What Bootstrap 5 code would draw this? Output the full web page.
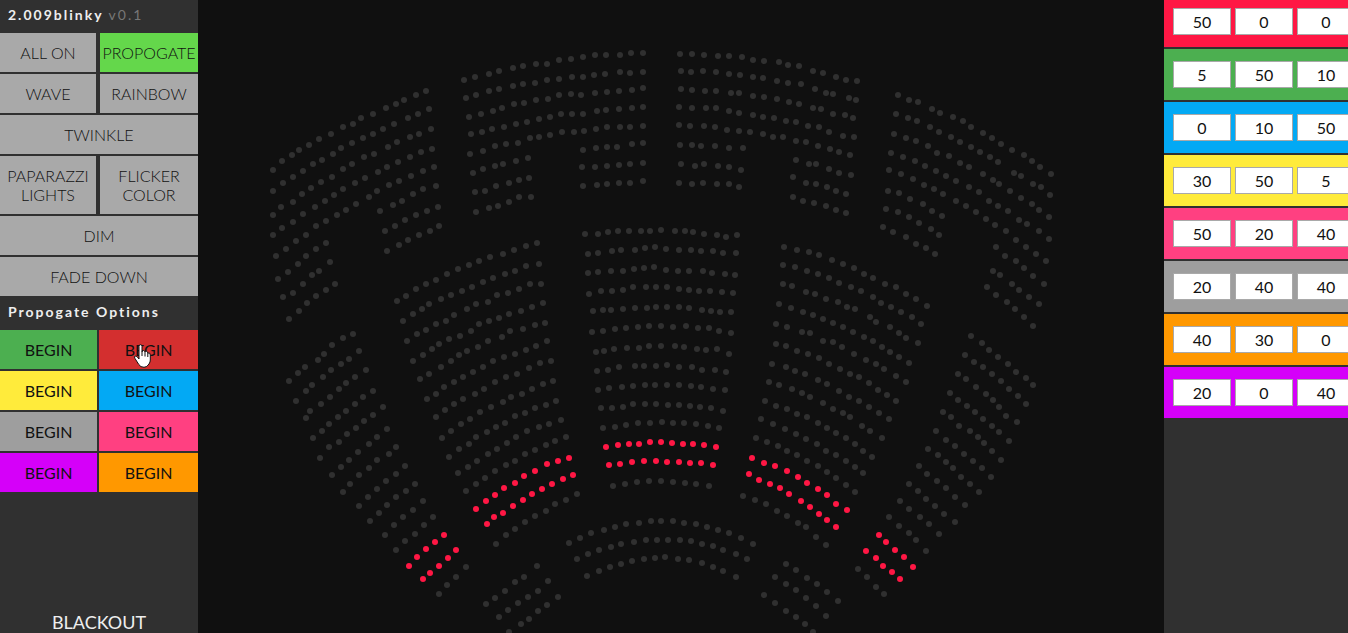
<!DOCTYPE html>
<html lang="en">
<head>
<meta charset="utf-8">
<meta name="viewport" content="width=device-width, initial-scale=1">
<title>2.009blinky</title>
<link href="https://cdn.jsdelivr.net/npm/bootstrap@5.3.0/dist/css/bootstrap.min.css" rel="stylesheet">
<style>
body{background:#101010;font-family:Lato,"Open Sans",sans-serif;color:#111}
.side{width:198px;background:#303030}
.palette{width:184px;background:#303030;gap:2px}
.heading{font-size:14px;line-height:18px;font-weight:700;letter-spacing:2px;color:#eee;padding:6px 8px 9px;margin:0}
.heading.options{padding:7px 8px 9px}
.heading .version{color:#777;font-weight:400}
.modes{display:grid;grid-template-columns:96fr 98fr;gap:2px 4px}
.begins{display:grid;grid-template-columns:97fr 99fr;gap:2px}
.wide{grid-column:1/-1}
.tile{--bs-btn-border-width:0px;border-radius:0;padding:10px 0;font-size:16px;line-height:19px;color:#111;background:var(--tone,#a9a9a9)}
.tile:hover,.tile:active{background:var(--tone,#a9a9a9)!important;color:#111!important}
.modes .tile{font-weight:300}
.hand{left:35px;top:14px;pointer-events:none}
.blackout{border:0;border-radius:0;color:#eee;font-size:18px;line-height:22px;padding:0}
.blackout:hover{color:#fff}
.swatch{background:var(--tone);padding:12px 9px}
.swatch:first-child{padding-top:8px}
.level{width:58px;height:27px;border:1px solid #a9a9a9;border-radius:0;background:#fff;color:#111;font-size:16px;line-height:19px;padding:0;text-align:center;flex:none}
.seats{fill:#303030}
.lit{fill:#ff1744}
.green{--tone:#4caf50}.red{--tone:#d32f2f}.yellow{--tone:#ffeb3b}.blue{--tone:#03a9f4}
.grey{--tone:#9e9e9e}.pink{--tone:#ff4081}.violet{--tone:#d500f9}.amber{--tone:#ff9800}
.crimson{--tone:#ff1744}.active-mode{--tone:#64d74b}
</style>
</head>
<body>
<div class="d-flex vh-100 overflow-hidden">
  <aside class="side d-flex flex-column flex-shrink-0">
    <h1 class="heading">2.009blinky <span class="version">v0.1</span></h1>
    <div class="modes">
      <button type="button" class="btn tile">ALL ON</button>
      <button type="button" class="btn tile active-mode">PROPOGATE</button>
      <button type="button" class="btn tile">WAVE</button>
      <button type="button" class="btn tile">RAINBOW</button>
      <button type="button" class="btn tile wide">TWINKLE</button>
      <button type="button" class="btn tile">PAPARAZZI<br>LIGHTS</button>
      <button type="button" class="btn tile">FLICKER<br>COLOR</button>
      <button type="button" class="btn tile wide">DIM</button>
      <button type="button" class="btn tile wide">FADE DOWN</button>
    </div>
    <h2 class="heading options">Propogate Options</h2>
    <div class="begins">
      <button type="button" class="btn tile green">BEGIN</button>
      <button type="button" class="btn tile red position-relative">BEGIN
        <svg class="hand position-absolute" width="17" height="24" viewBox="0 0 17 24" aria-hidden="true"><path d="M5 15V2.500Q5 .7 6.500 .7T8 2.500V8Q8.300 6.300 9.600 6.500T11 8Q11.500 7 12.700 7.400T13.800 9Q16.300 8.300 16.300 11V16Q16.300 18 15 20Q13 23.300 10 23.300Q6.500 23.300 4.800 20.500L1 14.500Q-.2 12.700 1.200 12Q2.700 11.400 5 15Z" fill="#fff" stroke="#111" stroke-width="1"/><path d="M8 8V12M11 8V12.500M13.800 9V13" stroke="#111" fill="none"/></svg>
      </button>
      <button type="button" class="btn tile yellow">BEGIN</button>
      <button type="button" class="btn tile blue">BEGIN</button>
      <button type="button" class="btn tile grey">BEGIN</button>
      <button type="button" class="btn tile pink">BEGIN</button>
      <button type="button" class="btn tile violet">BEGIN</button>
      <button type="button" class="btn tile amber">BEGIN</button>
    </div>
    <button type="button" class="btn blackout mt-auto">BLACKOUT</button>
  </aside>

  <main class="flex-grow-1 overflow-hidden">
    <svg id="plan" class="seats d-block w-100 h-100" viewBox="198 0 966 633" preserveAspectRatio="xMidYMin meet" role="img" aria-label="Auditorium seats"></svg>
  </main>

  <aside class="palette d-flex flex-column flex-shrink-0 overflow-hidden" id="palette"></aside>
</div>

<script src="https://cdn.jsdelivr.net/npm/bootstrap@5.3.0/dist/js/bootstrap.bundle.min.js"></script>
<script>
// Seating blocks: origin in plan units, subdivisions per unit, then one line per row.
// A row that starts with * is lit.
const blocks = [
[255,40,3,`54,390 81,363 111,345 132,330 162,315 192,297 228,282 264,261 294,252 318,234 354,222 393,204 423,192 447,180 483,165 513,153
54,453 84,429 114,411 144,393 174,372 201,360 234,342 258,324 291,309 324,294 354,282 384,267 417,252 459,234 489,222 522,207
54,525 78,501 114,486 141,462 168,444 198,426 231,411 264,387 291,372 327,351 357,342 399,321 426,306 465,291 492,282 528,267
54,585 81,564 114,546 144,522 180,501 210,483 237,465 264,447 300,429 330,414 369,396 396,381 429,366 465,351 498,336 531,327
63,648 93,627 123,603 153,585 183,558 213,543 246,525 273,510 303,492 342,471 366,453 402,435 432,423 468,408 504,393 537,381
69,717 99,696 129,672 153,648 183,627 213,609 375,513 414,495 441,483 474,462 504,447 543,438
84,771 114,759 144,732 171,705 192,693 225,666 390,573 420,558 450,540 483,525 516,513 549,501
102,837 132,813 156,789 183,768 213,750 240,732 396,633 432,615 459,600 492,585 525,573 552,558`],
[450,40,3,`42,120 75,111 117,102 147,93 189,84 219,78 258,72 291,72 327,60 363,57 399,51 435,45 468,45 510,45 543,39 579,39
48,174 78,165 117,153 147,147 189,138 219,132 255,129 291,120 327,117 366,111 399,111 432,105 465,102 510,96 540,99 579,96
57,231 93,222 129,213 156,204 192,192 222,189 258,180 294,177 327,165 363,162 393,165 435,159 471,156 507,153 546,150 579,144
63,282 96,276 126,267 162,261 198,252 231,246 267,237 300,231 333,222 366,222 399,222 441,213 468,210 507,207 546,204 579,201
60,342 99,333 135,318 168,312 204,309 240,294 267,291 300,285 336,276 372,276 402,273 438,267 471,261 510,261 540,261 579,258
69,399 99,387 135,378 159,372 198,363 234,354 399,330 438,324 471,321 501,321 546,312 579,309
75,456 105,453 138,438 177,429 207,420 237,414 396,381 435,381 471,378 507,375 540,372 579,369
78,516 117,504 144,498 177,486 207,471 243,471 399,438 441,435 471,432 507,429 540,429 579,423`],
[660,40,3,`60,42 96,42 132,45 174,48 207,48 246,51 279,60 312,63 357,66 384,75 417,78 459,93 489,99 528,111 558,120 591,123
63,93 93,96 129,93 168,96 207,102 240,105 279,111 309,114 351,123 384,129 423,132 465,147 498,159 519,162 567,174 588,180
63,147 96,150 135,153 168,153 213,159 237,159 279,168 312,171 351,177 387,186 417,192 459,204 483,207 519,222 555,225 579,234
57,201 96,204 138,204 168,204 207,213 237,219 279,225 309,231 342,234 378,243 408,246 444,258 477,261 507,276 549,288 582,291
57,255 90,258 132,258 165,261 201,270 237,273 270,276 309,282 339,291 369,291 408,303 438,306 474,318 510,327 537,336 570,345
60,315 96,315 123,318 165,318 207,324 249,324 408,360 447,372 468,372 507,387 537,399 573,405
63,372 105,378 132,372 174,378 207,381 243,390 399,411 438,429 468,432 501,441 528,453 558,462
57,429 96,432 129,429 171,432 207,432 237,441 399,471 429,483 462,489 498,498 528,510 558,519`],
[865,80,3,`99,45 132,60 159,66 201,87 225,99 264,111 294,123 318,141 354,159 381,174 408,192 441,210 477,225 501,243 525,261 558,282
93,102 129,114 156,123 195,141 222,156 258,171 285,186 318,201 345,216 375,231 399,246 447,279 468,288 504,312 528,321 555,345
87,162 123,174 153,183 189,198 216,219 252,228 285,249 312,261 354,282 384,300 402,312 435,333 468,354 501,372 522,390 552,411
78,219 114,231 150,243 180,258 213,273 243,288 273,303 312,321 342,336 372,363 399,378 429,393 462,420 486,432 522,453 552,477
72,270 108,282 144,297 177,315 207,327 234,342 273,363 303,378 333,396 363,417 390,435 423,453 453,480 483,501 513,522 543,543
69,333 102,339 135,357 174,372 201,393 231,408 393,501 420,528 453,543 477,564 504,588 537,612
63,387 99,396 132,411 162,429 198,447 222,465 384,573 405,585 441,612 462,630 492,651 522,672
54,441 84,456 123,471 153,492 183,504 210,522 366,621 393,645 426,666 450,687 477,711 504,738`],
[275,320,3,`42,183 69,159 90,141 129,120 147,102 171,75 204,54 234,42
63,243 93,213 111,195 144,171 168,150 198,132 222,117 252,93
93,294 105,273 138,252 165,231 192,207 213,189 240,171 273,150
114,354 141,333 162,312 189,291 213,273 240,252 264,231 294,213
135,414 162,381 192,366 216,342 243,324 267,303 294,285 324,261
171,465 198,441 222,420 249,396 282,372 306,351 336,327
204,516 225,492 252,465 282,444 306,420 342,402 363,381
252,558 279,531 306,507 333,483 363,462 390,438
285,603 312,579 336,555 363,531 393,513 420,492
330,645 357,615 384,591 414,570 444,543
363,690 390,663 420,642 447,615 474,591
*402,738 426,711 453,687 480,666 507,645
*444,777 465,759 492,738 519,714 543,690
492,822 516,795 543,771 573,741`],
[380,220,3,`51,243 78,228 108,207 138,192 168,180 201,162 234,147 267,135 297,123 330,111 369,102 402,90 438,78 471,69
69,303 99,282 126,267 147,252 183,237 213,225 246,213 276,201 309,186 339,174 375,162 405,153 438,138 477,132
81,363 111,342 138,330 168,312 198,303 222,285 261,267 288,252 324,246 351,225 384,219 417,207 450,192 483,192
99,423 129,405 156,387 177,372 207,357 240,348 273,333 297,312 327,303 357,294 387,282 423,273 456,261 489,249
120,477 147,462 183,441 213,423 237,405 261,393 294,381 324,363 366,351 390,333 429,327 465,315 495,309
141,537 168,522 192,501 222,486 249,471 279,456 309,441 339,423 372,411 405,402 438,390 468,378 501,363
168,591 195,570 222,552 249,537 285,522 312,507 345,486 378,471 411,462 447,444 480,429 513,423
186,654 213,633 243,612 270,597 300,576 333,561 369,546 393,531 426,522 456,507 489,492 519,483
207,711 237,687 267,672 288,651 321,636 348,621 375,609 405,588 435,579 465,564 498,555 528,543
234,759 264,741 291,723 324,702 351,687 381,669 408,651 441,633 477,621 507,612 543,600
258,813 288,792 315,774 345,753 378,735 405,723 435,702 465,690 498,675 525,663 558,651
*288,867 318,843 345,825 372,804 405,789 432,768 465,753 501,732 534,723 567,714
*321,912 342,891 369,879 399,858 429,840 456,822 486,807 516,792 549,777 579,765
348,972 378,945 405,927 435,906 465,888 498,873 525,852 558,840 591,822`],
[570,220,3,`45,42 84,42 114,36 144,33 177,33 213,33 240,33 273,30 315,33 345,33 369,36 402,42 441,45 468,51 501,45
54,102 84,99 126,93 153,90 195,90 225,84 255,81 288,87 327,90 363,90 393,93 429,93 459,99 498,99
54,159 84,156 123,153 159,153 192,147 222,144 252,141 288,150 324,153 357,153 399,153 426,159 465,162 495,165
57,222 93,213 126,213 159,210 189,201 228,201 258,201 291,201 327,207 357,210 387,213 420,213 456,216 489,219
69,273 99,270 123,270 159,267 195,264 231,264 258,261 291,261 327,261 357,264 396,270 423,273 450,276 483,276
66,336 99,333 135,327 168,324 204,321 237,318 273,318 309,321 348,318 384,324 417,324 447,333 483,339
78,396 102,393 132,387 171,384 207,384 237,378 273,378 315,378 342,381 381,387 408,390 441,387 477,402
81,453 114,450 147,441 195,438 222,438 258,438 291,435 327,441 366,441 396,450 435,450 468,456
84,510 117,504 156,501 189,498 225,495 255,495 291,495 327,495 363,498 393,501 429,507 465,510
93,564 126,564 159,561 189,552 225,552 258,552 294,555 327,555 360,558 390,561 423,564 459,573
99,624 135,621 168,615 204,609 240,609 276,606 309,609 342,609 378,612 414,618 447,624
*108,681 144,675 177,672 207,672 240,666 273,666 306,669 339,672 369,672 402,675 438,681
*117,735 150,732 186,726 222,723 258,723 291,726 327,726 360,729 393,729 429,735
129,798 165,792 201,786 237,783 273,783 309,786 345,789 378,792 417,798`],
[740,230,3,`132,51 171,60 207,66 237,75 276,90 309,102 342,114 372,132 399,144 435,162 468,171 498,192 528,207 561,228
129,105 165,111 201,123 234,132 267,144 297,159 333,171 363,183 399,201 423,219 453,231 483,246 516,261 543,282
129,162 156,168 198,186 225,192 258,207 294,216 321,231 345,237 390,261 408,276 450,291 477,309 498,324 534,339
117,222 153,234 189,246 219,255 249,267 279,279 309,291 339,306 372,321 399,333 426,351 450,366 477,381 507,399
108,282 141,291 186,306 210,309 249,333 279,336 306,351 342,372 378,390 408,402 432,417 468,438 498,456
108,342 138,348 171,363 204,372 237,384 267,402 300,417 330,432 357,441 387,459 414,480 441,495 468,513
96,402 138,411 165,423 195,432 234,450 261,462 297,483 327,501 357,513 387,531 417,549 447,567
87,456 117,465 156,477 186,489 210,501 249,519 279,537 309,549 330,561 366,588 390,603 426,624
75,513 108,528 141,537 171,552 201,561 234,579 261,594 288,609 318,624 345,642 369,663 396,681
63,567 99,582 135,597 168,612 198,627 231,642 258,663 288,675 318,693 345,711 369,729
48,624 81,636 114,648 141,663 171,675 201,693 234,708 261,726 288,744 318,765 345,786
*36,684 72,699 105,708 141,723 174,741 201,759 234,777 261,795 288,822 321,840
*27,732 57,750 90,762 120,774 147,792 183,813 210,831 237,852 261,870 288,891
9,798 45,810 78,822 111,843 141,858 174,879 198,891 228,921 258,945`],
[840,320,3,`393,48 426,69 447,90 474,111 504,132 528,156 558,174 579,195
375,105 402,126 429,141 456,162 483,183 507,207 534,228 558,252
354,162 378,177 408,201 438,222 459,240 477,261 498,288 531,306
330,219 354,240 381,258 405,276 429,297 456,318 477,336 507,363
309,276 333,291 357,318 390,333 414,351 432,369 456,393 483,420
288,333 318,360 345,378 372,402 399,423 426,444 453,471
264,387 294,405 318,426 339,444 363,471 390,492 417,516
237,438 261,462 291,483 318,504 345,531 375,555
207,492 234,513 258,537 285,558 312,582 345,606
180,543 207,567 240,591 267,612 297,642
147,591 177,618 207,639 228,660 258,693
*117,645 138,666 165,690 192,711 219,741
*78,693 108,714 129,738 156,756 180,777
54,747 81,771 108,801 132,822`],
[0,0,1,`569,543 580,538 591,533 604,530 615,527 626,524 639,523 651,521 661,521 673,521 684,523 696,524 707,527 718,530 729,533 741,538 753,544
577,559 588,554 599,550 611,547 621,544 634,542 646,540 657,540 668,540 680,540 691,541 702,544 713,546 723,550 736,554 747,559
587,576 599,571 610,567 621,564 632,561 644,559 655,558 665,557 678,559 689,560 702,563 713,567 723,571 736,577
486,604 495,598 505,591 515,582 524,577 537,566
499,617 508,610 518,603 528,597 538,591 548,581
509,632 521,624 529,619 538,611 547,605 558,597
786,564 796,570 807,578 817,584 827,592 838,601
775,577 786,584 796,590 806,598 816,606 826,616
764,595 775,603 786,611 796,617 805,624 813,632`]
];
document.getElementById('plan').innerHTML = blocks.map(([ox, oy, n, rows]) =>
  rows.split('\n').map(row => {
    const lit = row[0] === '*';
    const seats = row.replace('*', '').split(' ').map(s => {
      const [x, y] = s.split(',');
      return `<circle cx="${ox + x / n}" cy="${oy + y / n}" r="3"/>`;
    }).join('');
    return `<g${lit ? ' class="lit"' : ''}>${seats}</g>`;
  }).join('')).join('');

const colours = [['crimson',50,0,0],['green',5,50,10],['blue',0,10,50],['yellow',30,50,5],
  ['pink',50,20,40],['grey',20,40,40],['amber',40,30,0],['violet',20,0,40]];
document.getElementById('palette').innerHTML = colours.map(([name, ...rgb]) =>
  `<div class="swatch ${name} d-flex gap-1 overflow-hidden flex-shrink-0">${rgb.map((v, i) =>
    `<input class="level" type="text" inputmode="numeric" value="${v}" aria-label="${name} ${['red','green','blue'][i]} level">`).join('')}</div>`
).join('');
</script>
</body>
</html>
